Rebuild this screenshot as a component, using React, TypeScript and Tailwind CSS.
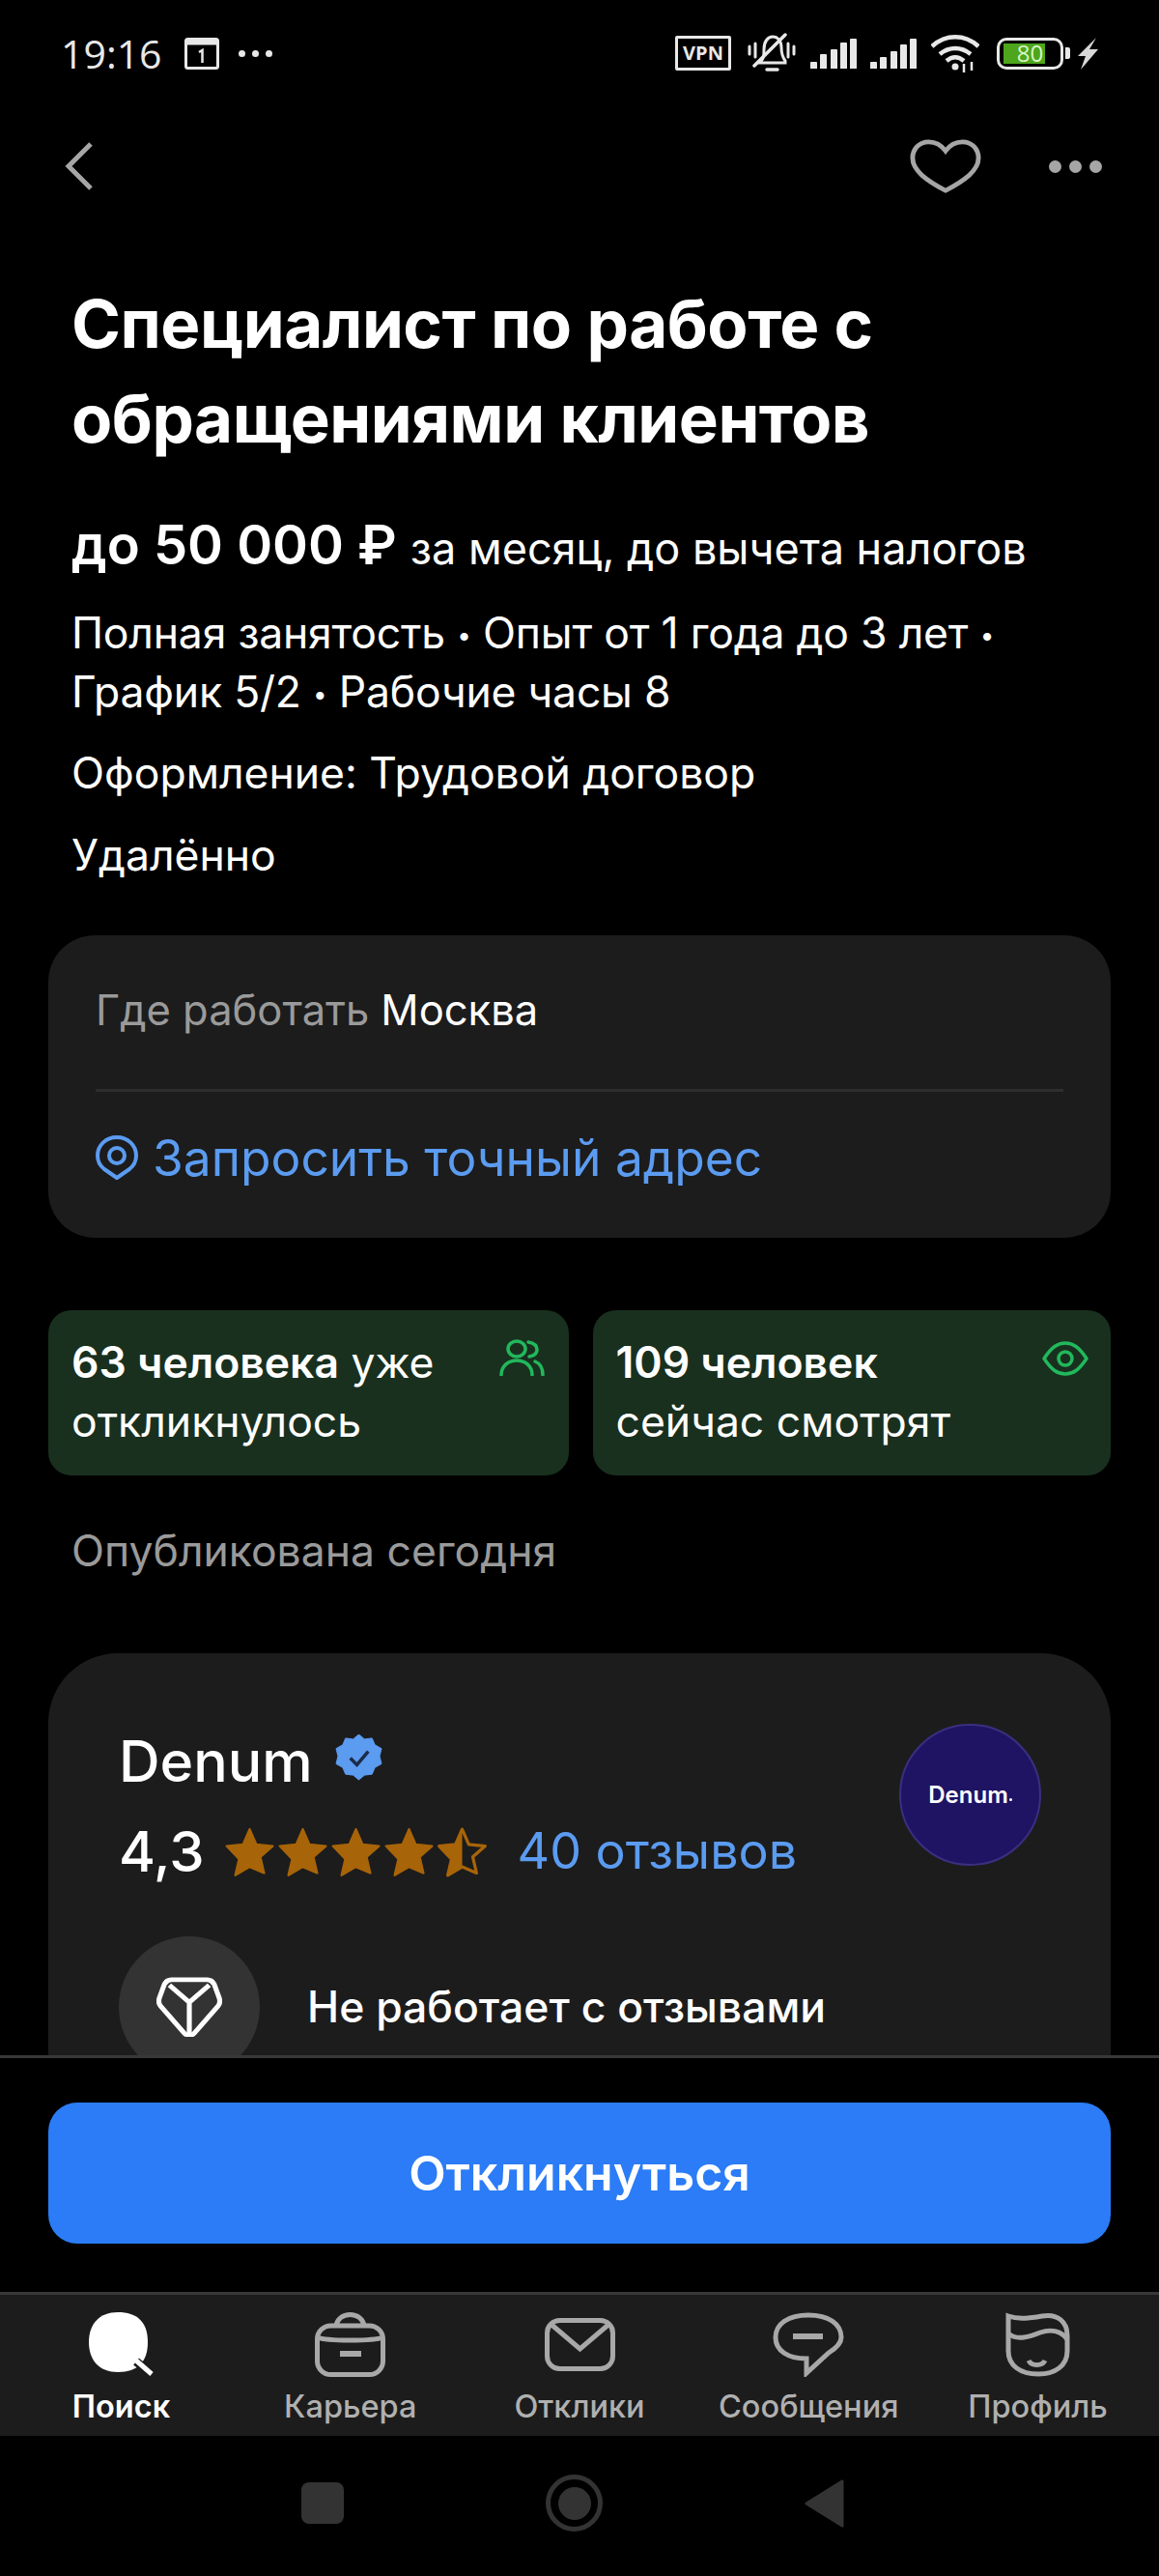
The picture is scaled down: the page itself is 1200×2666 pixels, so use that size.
import React from "react";

const font = { fontFamily: "Inter, 'Noto Sans', sans-serif" };
const statusFont = { fontFamily: "'Open Sans', sans-serif" };

const STAR = "M12 1.8l3 6.9 7.4.7-5.6 4.9 1.7 7.3L12 18.8l-6.5 3.800 1.7-7.300L1.600 9.400 9 8.700z";

function Star({ half }: { half?: boolean }) {
  return (
    <svg width="55" height="55" viewBox="0 0 24 24">
      {half ? (
        <>
          <defs>
            <clipPath id="left-half">
              <rect x="0" y="0" width="12" height="24" />
            </clipPath>
          </defs>
          <path d={STAR} fill="none" stroke="#a86408" strokeWidth="1.4" strokeLinejoin="round" />
          <path d={STAR} fill="#a86408" stroke="#a86408" strokeLinejoin="round" clipPath="url(#left-half)" />
        </>
      ) : (
        <path d={STAR} fill="#a86408" stroke="#a86408" strokeLinejoin="round" />
      )}
    </svg>
  );
}

function Signal({ heights }: { heights: number[] }) {
  return (
    <div className="flex items-end justify-between w-[48px] h-[31px]">
      {heights.map((h, i) => (
        <div key={i} className="w-[7px] bg-[#e8e8e8] rounded-t-[1px]" style={{ height: h }} />
      ))}
    </div>
  );
}

function Dot() {
  return <span className="text-[26px] leading-none align-[4px]">•</span>;
}

function StatusBar() {
  return (
    <div className="h-[110px] flex items-center justify-between pl-[63px] pr-[63px] text-[#e8e8e8]">
      <div className="flex items-center">
        <span className="text-[41px] leading-none" style={statusFont}>19:16</span>
        <svg width="36" height="33" viewBox="0 0 36 33" className="ml-[23px]">
          <rect x="1.5" y="1.5" width="33" height="30" rx="2" fill="none" stroke="#e8e8e8" strokeWidth="3" />
          <rect x="1.5" y="1.5" width="33" height="6" fill="#e8e8e8" />
          <path d="M15 15l3.500-2v13" fill="none" stroke="#e8e8e8" strokeWidth="2.5" />
        </svg>
        <div className="flex gap-[7px] ml-[20px]">
          <span className="w-[7px] h-[7px] rounded-full bg-[#e8e8e8]" />
          <span className="w-[7px] h-[7px] rounded-full bg-[#e8e8e8]" />
          <span className="w-[7px] h-[7px] rounded-full bg-[#e8e8e8]" />
        </div>
      </div>
      <div className="flex items-center">
        <div className="w-[58px] h-[36px] border-[3px] border-[#e8e8e8] rounded-[2px] flex items-center justify-center text-[20px] font-bold leading-none" style={statusFont}>VPN</div>
        <svg width="50" height="42" viewBox="0 0 50 42" className="ml-[17px]" fill="none" stroke="#e8e8e8" strokeWidth="3" strokeLinecap="round">
          <path d="M14 29c3-3 3-6 3-12 0-8 4-13 9-13s9 4 9 11c0 7 1 10 4 14v2H12z" />
          <path d="M20 38h11" strokeWidth="3.500" />
          <path d="M39 2L7 34" strokeWidth="3.500" />
          <path d="M2 14v8M8 11v14M42 11v14M48 14v8" />
        </svg>
        <div className="ml-[15px]">
          <Signal heights={[7, 15, 20, 27, 31]} />
        </div>
        <div className="ml-[14px]">
          <Signal heights={[7, 12, 18, 25, 31]} />
        </div>
        <svg width="50" height="39" viewBox="0 0 50 39" className="ml-[15px]" fill="none" stroke="#e8e8e8" strokeWidth="4.5">
          <path d="M1 12c14-13 34-13 48 0" />
          <path d="M9 20c10-8 22-8 32 0" />
          <path d="M16 27c6-5 12-5 18 0" />
          <circle cx="25" cy="33" r="3.500" fill="#e8e8e8" stroke="none" />
          <path d="M34 30v9M42 28v9" strokeWidth="2.500" />
        </svg>
        <div className="ml-[18px] w-[69px] h-[33px] border-[3px] border-[#e8e8e8] rounded-[10px] relative overflow-hidden">
          <div className="absolute left-[4px] top-[3px] bottom-[3px] w-[43px] bg-[#4da61c]" />
          <span className="absolute inset-0 flex items-center justify-center text-[#d8f5c8] text-[24px] leading-none" style={statusFont}>80</span>
        </div>
        <div className="w-[5px] h-[12px] rounded-r-[2px] bg-[#e8e8e8] ml-[2px]" />
        <svg width="21" height="33" viewBox="0 0 21 33" className="ml-[8px]" fill="#d8d8d8">
          <path d="M19 0L0 19h8L3 33 21 12h-9z" />
        </svg>
      </div>
    </div>
  );
}

function Tab({ label, active, children }: { label: string; active?: boolean; children: React.ReactNode }) {
  return (
    <div className="flex flex-col items-center w-[237px]">
      <div className="h-[68px] flex items-center justify-center">{children}</div>
      <span className={`text-[32.500px] leading-[44px] mt-[9px] ${active ? "text-white font-semibold" : "text-[#b0b0b0] font-medium"}`}>{label}</span>
    </div>
  );
}

export default function App() {
  return (
    <div className="w-[1200px] h-[2666px] bg-black text-white overflow-hidden flex flex-col" style={font}>
      <StatusBar />

      {/* Scroll area, cut off by the button block */}
      <div className="h-[2017px] shrink-0 overflow-hidden">
        <div className="flex items-center justify-between h-[124px] pl-[67px] pr-[59px]">
          <svg width="30" height="50" viewBox="0 0 30 50" fill="none" stroke="#a6a6a6" strokeWidth="5">
            <path d="M27 2L4 25l23 23" />
          </svg>
          <div className="flex items-center gap-[70px]">
            <svg width="74" height="56" viewBox="0 0 76 60" preserveAspectRatio="none" fill="none" stroke="#a6a6a6" strokeWidth="5">
              <path d="M38 13C33 6 27 3 20 3 10 3 3 11 3 21c0 14 15 25 35 36 20-11 35-22 35-36 0-10-7-18-17-18-7 0-13 3-18 10z" />
            </svg>
            <div className="flex gap-[8px]">
              <span className="w-[13px] h-[13px] rounded-full bg-[#a6a6a6]" />
              <span className="w-[13px] h-[13px] rounded-full bg-[#a6a6a6]" />
              <span className="w-[13px] h-[13px] rounded-full bg-[#a6a6a6]" />
            </div>
          </div>
        </div>

        <div className="px-[74px] pt-[52px]">
          <h1 className="text-[69px] leading-[98px] font-bold tracking-[-0.5px]">
            Специалист по работе с<br />обращениями клиентов
          </h1>
          <div className="mt-[52px] flex items-baseline">
            <span className="text-[56px] leading-[60px] font-semibold">до 50 000 ₽</span>
            <span className="text-[45px] leading-[60px] ml-[14px]">за месяц, до вычета налогов</span>
          </div>
          <p className="text-[44.500px] leading-[61px] mt-[27px] tracking-[-0.2px]">
            Полная занятость <Dot /> Опыт от 1 года до 3 лет <Dot />
            <br />
            График 5/2 <Dot /> Рабочие часы 8
          </p>
          <p className="text-[44.500px] leading-[62px] mt-[22px]">Оформление: Трудовой договор</p>
          <p className="text-[44.500px] leading-[62px] mt-[23px]">Удалённо</p>
        </div>

        <div className="mx-[50px] mt-[52px] h-[313px] rounded-[48px] bg-[#1c1c1c] px-[49px]">
          <div className="pt-[47px] pb-[52px] text-[43.500px] leading-[60px] border-b-[3px] border-[#2e2e2e]">
            <span className="text-[#9a9a9a]">Где работать</span>
            <span className="ml-[12px]">Москва</span>
          </div>
          <div className="pt-[38px] flex items-center text-[51.500px] leading-[60px] text-[#5b9bf0]">
            <svg width="44" height="46" viewBox="0 0 44 46" fill="none" stroke="#5b9bf0" strokeWidth="4" className="mr-[15px]">
              <path d="M22 44L9 35C4 31 2 26 2 21 2 10 11 2 22 2s20 8 20 19c0 5-2 10-7 14z" strokeLinejoin="round" />
              <circle cx="22" cy="21" r="8" />
            </svg>
            Запросить точный адрес
          </div>
        </div>

        <div className="mx-[50px] mt-[75px] flex gap-[25px]">
          <div className="flex-1 h-[171px] rounded-[24px] bg-[#19301f] pl-[24px] pr-[25px] pt-[24px] flex justify-between items-start">
            <p className="text-[44.500px] leading-[61px]">
              <span className="font-semibold">63 человека</span> уже<br />откликнулось
            </p>
            <svg width="47" height="38" viewBox="0 0 47 38" className="mt-[6px]" fill="none" stroke="#22b85c" strokeWidth="3.500" strokeLinecap="round">
              <ellipse cx="18" cy="10" rx="9" ry="8" />
              <path d="M2 37c0-9 7-15 16-15s16 6 16 15" />
              <path d="M30 3c6 1 9 4 9 8s-3 6-8 7" />
              <path d="M37 23c5 2 8 7 8 14" />
            </svg>
          </div>
          <div className="flex-1 h-[171px] rounded-[24px] bg-[#19301f] pl-[24px] pr-[23px] pt-[24px] flex justify-between items-start">
            <p className="text-[44.500px] leading-[61px]">
              <span className="font-semibold">109 человек</span><br />сейчас смотрят
            </p>
            <svg width="48" height="36" viewBox="0 0 48 36" className="mt-[8px]" fill="none" stroke="#22b85c" strokeWidth="3.500" strokeLinejoin="round">
              <path d="M2 18C10 6 16 2 24 2s14 4 22 16C38 30 32 34 24 34S10 30 2 18z" />
              <circle cx="24" cy="18" r="7" />
            </svg>
          </div>
        </div>

        <p className="ml-[74px] mt-[54px] text-[44.500px] leading-[48px] text-[#9a9a9a]">Опубликована сегодня</p>

        {/* Company card, continues below the fold */}
        <div className="mx-[50px] mt-[82px] h-[480px] rounded-t-[72px] bg-[#1c1c1c] pl-[73px] pr-[72px] pt-[73px] flex justify-between items-start">
          <div className="mt-[9px]">
            <div className="flex items-center h-[60px]">
              <span className="text-[59px] leading-[60px] font-medium">Denum</span>
              <svg width="49" height="49" viewBox="0 0 48 50" className="ml-[23px] -mt-[8px]">
                <path
                  d="M24 0l6 5 8-1 3 7 7 4-2 8 2 8-7 4-3 7-8 1-6 5-6-5-8-1-3-7-7-4 2-8-2-8 7-4 3-7 8 1z"
                  fill="#5b9bf0"
                  stroke="#5b9bf0"
                  strokeLinejoin="round"
                />
                <path d="M15 25l7 7 12-14" fill="none" stroke="#1c2b48" strokeWidth="3.500" />
              </svg>
            </div>
            <div className="flex items-center mt-[33px] h-[60px]">
              <span className="text-[58px] leading-[60px] font-medium mr-[19px]">4,3</span>
              <Star />
              <Star />
              <Star />
              <Star />
              <Star half />
              <span className="text-[52px] leading-[60px] text-[#5b9bf0] ml-[30px]">40 отзывов</span>
            </div>
            <div className="flex items-center mt-[58px]">
              <div className="w-[146px] h-[146px] rounded-full bg-[#333333] flex items-center justify-center">
                <svg width="68" height="62" viewBox="0 0 66 66" preserveAspectRatio="none" fill="none" stroke="#ffffff" strokeWidth="5" strokeLinejoin="round">
                  <path d="M15 3h36c4 0 5 2 7 5l5 15c1 3 1 6-1 9L38 62c-2 3-8 3-10 0L4 32c-2-3-2-6-1-9L8 8c2-3 3-5 7-5z" />
                  <path d="M13 9l20 19 20-19M33 28v35" />
                </svg>
              </div>
              <span className="ml-[49px] text-[44.500px] font-medium">Не работает с отзывами</span>
            </div>
          </div>
          <div className="w-[147px] h-[147px] rounded-full bg-[#1f1464] border-[2px] border-[#3a2f80] flex items-center justify-center text-[24px] font-semibold">
            Denum<span className="w-[3px] h-[3px] rounded-full bg-white ml-[1px] mt-[10px]" />
          </div>
        </div>
      </div>

      {/* Bottom action */}
      <div className="h-[245px] shrink-0 bg-black border-t-[3px] border-[#383838] px-[50px] pt-[46px]">
        <button className="w-full h-[146px] rounded-[30px] bg-[#2b7cf6] text-white text-[50px] font-semibold">
          Откликнуться
        </button>
      </div>

      {/* Tab bar */}
      <div className="h-[149px] shrink-0 bg-[#1c1c1c] border-t-[3px] border-[#383838] flex justify-between items-start px-[7px] pt-[17px]">
        <Tab label="Поиск" active>
          <svg width="67" height="66" viewBox="0 0 67 66">
            <path d="M30 0c20 0 31 10 31 31 0 20-10 31-31 31C11 62 0 50 0 31 0 12 11 0 30 0z" fill="#fff" />
            <path d="M49 51l16 13" stroke="#1c1c1c" strokeWidth="9" />
            <path d="M49 50l16 14" stroke="#fff" strokeWidth="5" />
          </svg>
        </Tab>
        <Tab label="Карьера">
          <svg width="73" height="67" viewBox="0 0 73 67" fill="none" stroke="#a8a8a8" strokeWidth="5">
            <rect x="2.500" y="14" width="68" height="50.500" rx="14" />
            <path d="M2.500 26c10 4 58 4 68 0" />
            <path d="M22 14c1-7 7-11.500 14.500-11.500S50 7 51 14" />
            <path d="M26 43h22" strokeWidth="6" />
          </svg>
        </Tab>
        <Tab label="Отклики">
          <svg width="73" height="55" viewBox="0 0 73 55" fill="none" stroke="#a8a8a8" strokeWidth="5">
            <rect x="2.500" y="2.500" width="68" height="50" rx="13" />
            <path d="M6 6l30.500 26L67 6" />
          </svg>
        </Tab>
        <Tab label="Сообщения">
          <svg width="74" height="67" viewBox="0 0 74 67" fill="none" stroke="#a8a8a8" strokeWidth="5">
            <path d="M37 3C16 3 3 12 3 26c0 14 13 22 32 22v15l23-21c8-5 13-10 13-16C71 12 58 3 37 3z" />
            <path d="M21 25h31" strokeWidth="6" />
          </svg>
        </Tab>
        <Tab label="Профиль">
          <svg width="67" height="67" viewBox="0 0 67 67" fill="none" stroke="#a8a8a8" strokeWidth="5">
            <path d="M3 4c11 4 23 2 35 0 16-3 26 6 26 20v16c0 15-12 24-30 24C15 64 3 55 3 40z" />
            <path d="M3 22c9 8 23 3 33-1 12-4 22-1 28 7" />
            <path d="M24 50c3 6 14 6 17 0" />
          </svg>
        </Tab>
      </div>

      {/* Android nav */}
      <div className="flex-1 bg-black flex items-center justify-center pb-[6px] pr-[14px]">
        <div className="w-[44px] h-[43px] rounded-[8px] bg-[#333333]" />
        <div className="w-[59px] h-[59px] rounded-full border-[5px] border-[#333333] ml-[209px] flex items-center justify-center">
          <div className="w-[34px] h-[34px] rounded-full bg-[#333333]" />
        </div>
        <svg width="41" height="50" viewBox="0 0 41 50" className="ml-[209px]" fill="#333333">
          <path d="M39 2v46L2 25z" stroke="#333333" strokeWidth="3" strokeLinejoin="round" />
        </svg>
      </div>
    </div>
  );
}
